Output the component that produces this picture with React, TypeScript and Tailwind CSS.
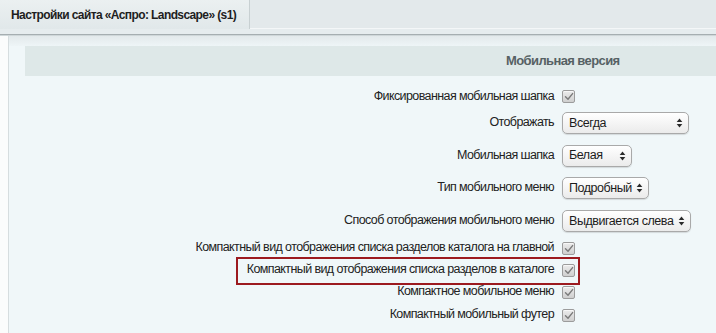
import React from "react";

const font = { fontFamily: '"Liberation Sans", Arial, Helvetica, sans-serif' };

function Check() {
  return (
    <div className="w-[13px] h-[13px] rounded-[2px] border border-[#9c9c9c] bg-gradient-to-b from-[#ececec] to-[#cfcfcf] flex items-center justify-center shadow-[inset_0_1px_0_rgba(255,255,255,0.6)]">
      <svg width="10" height="9" viewBox="0 0 10 9">
        <path d="M1.5 4.8 L4 7.2 L8.6 1.6" fill="none" stroke="#7a7a7a" strokeWidth="1.4" strokeLinecap="round" strokeLinejoin="round" />
      </svg>
    </div>
  );
}

function Select({ text, w }: { text: string; w: string }) {
  return (
    <div
      className={`${w} h-[22px] rounded-[5px] border border-[#a9a9a9] bg-gradient-to-b from-[#ffffff] to-[#ebebeb] shadow-[0_1px_1px_rgba(0,0,0,0.12)] flex items-center justify-between pl-[6px] pr-[5px] text-[12.5px] tracking-[-0.45px] text-[#1c1c1c] whitespace-nowrap`}
    >
      <span>{text}</span>
      <svg width="7" height="10" viewBox="0 0 7 10" className="shrink-0">
        <path d="M3.5 0.5 L6.3 4 L0.7 4 Z" fill="#2a2a2a" />
        <path d="M3.5 9.5 L6.3 6 L0.7 6 Z" fill="#2a2a2a" />
      </svg>
    </div>
  );
}

function Row({
  label,
  h,
  children,
  highlight,
}: {
  label: string;
  h: string;
  children: React.ReactNode;
  highlight?: boolean;
}) {
  return (
    <div className={`relative flex items-center ${h}`}>
      {highlight && (
        <div className="absolute left-[227px] top-0 w-[344px] h-[28px] border-2 border-[#9c1a1f]" />
      )}
      <div className="w-[545px] text-right text-[12.5px] tracking-[-0.6px] text-[#222] leading-none pb-[1px] whitespace-nowrap">
        {label}
      </div>
      <div className="ml-2 flex items-center">{children}</div>
    </div>
  );
}

export default function App() {
  return (
    <div className="w-[716px] h-[333px] overflow-hidden bg-[#f0f7f9]" style={font}>
      {/* top tab bar */}
      <div className="flex h-[29px] bg-[#e3e9eb]">
        <div className="w-[250px] border-r border-[#c8d0d2] bg-gradient-to-b from-[#ebf0f1] to-[#e1e8ea] flex items-center pl-[11px] text-[12px] tracking-[-0.6px] font-bold text-[#1e1e1e] whitespace-nowrap">
          Настройки сайта «Аспро: Landscape» (s1)
        </div>
        <div className="flex-1 border-b border-[#f4f7f8]" />
      </div>
      <div className="h-[5px] bg-[#e6ecee]" />
      <div className="h-[1px] bg-[#a6aeb1]" />
      <div className="h-[1px] bg-[#cfd7d9]" />
      {/* body */}
      <div className="flex h-[297px]">
        <div className="w-[8px] bg-[#fbfcfc]" />
        <div className="w-[1px] bg-[#d6dddf]" />
        <div className="flex-1 flex flex-col">
          <div className="h-[10px] bg-gradient-to-b from-[#e3e9eb] to-[#eef5f7]" />
          <div className="ml-[16px] h-[30px] bg-[#dee8e8] flex items-center pl-[481px] text-[13px] tracking-[-0.6px] font-bold text-[#566164] whitespace-nowrap">
            Мобильная версия
          </div>
          <div className="h-[9px]" />
          <Row label="Фиксированная мобильная шапка" h="h-[23px]">
            <Check />
          </Row>
          <Row label="Отображать" h="h-[30px]">
            <Select text="Всегда" w="w-[127px]" />
          </Row>
          <Row label="Мобильная шапка" h="h-[35px]">
            <Select text="Белая" w="w-[70px]" />
          </Row>
          <Row label="Тип мобильного меню" h="h-[30px]">
            <Select text="Подробный" w="w-[87px]" />
          </Row>
          <Row label="Способ отображения мобильного меню" h="h-[36px]">
            <Select text="Выдвигается слева" w="w-[129px]" />
          </Row>
          <Row label="Компактный вид отображения списка разделов каталога на главной" h="h-[18px]">
            <Check />
          </Row>
          <Row label="Компактный вид отображения списка разделов в каталоге" h="h-[26px]" highlight>
            <Check />
          </Row>
          <Row label="Компактное мобильное меню" h="h-[18px]">
            <Check />
          </Row>
          <Row label="Компактный мобильный футер" h="h-[28px]">
            <Check />
          </Row>
        </div>
      </div>
    </div>
  );
}
